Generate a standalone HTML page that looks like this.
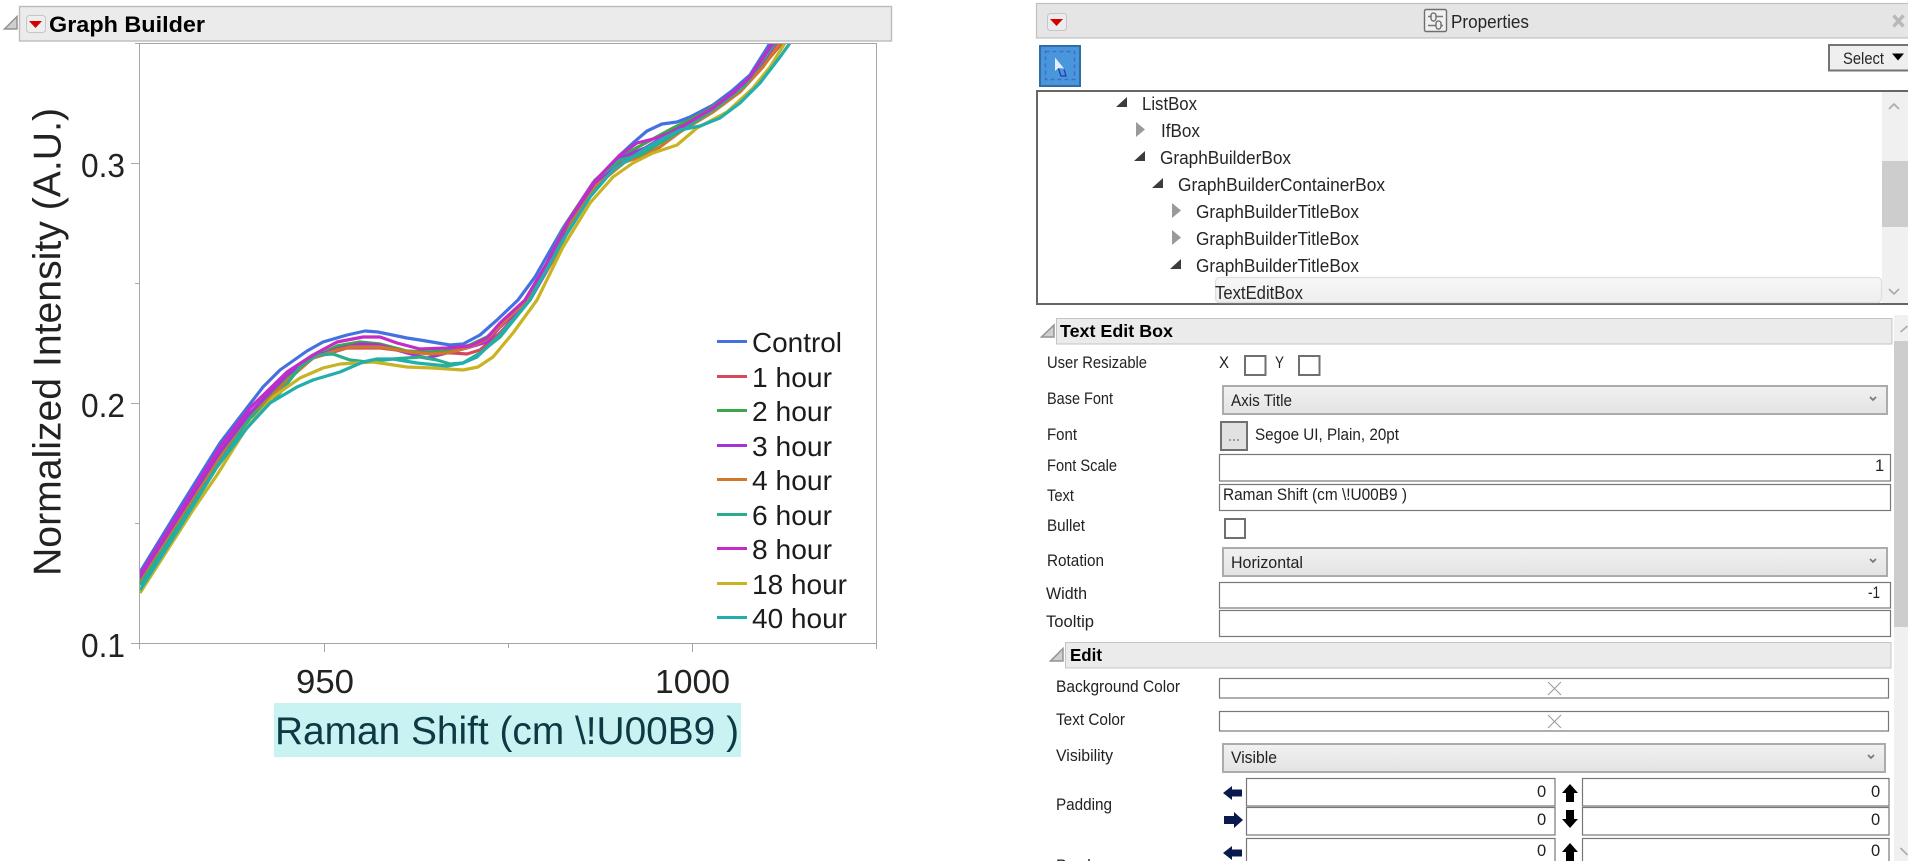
<!DOCTYPE html>
<html lang="en">
<head>
<meta charset="utf-8">
<title>Graph Builder</title>
<style>
html,body{margin:0;padding:0;background:#fff;width:1908px;height:862px;overflow:hidden}
svg{display:block;position:absolute;left:0;top:0}
text{font-family:"Liberation Sans",sans-serif;fill:#151515}
.l{font-size:16.5px;fill:#222}
.t{font-size:18px;fill:#262626}
.b{font-weight:bold}
.n{font-size:33px;fill:#222}
.g{font-size:27.5px;fill:#1c1c1c}
.box{fill:#fff;stroke:#777;stroke-width:1.2}
.chk{fill:#fff;stroke:#707070;stroke-width:2}
.dd{fill:url(#dd);stroke:#ababab;stroke-width:2}
.hd{fill:#ebebeb;stroke:#c4c4c4;stroke-width:1}
.c{fill:none;stroke-width:3.2;stroke-linejoin:round;stroke-linecap:butt}
.ax{stroke:#a6a6a6;stroke-width:1;fill:none}
.tri{fill:#cfcfcf;stroke:#939393;stroke-width:1.5}
</style>
</head>
<body>
<svg width="1908" height="862" viewBox="0 0 1908 862" xmlns="http://www.w3.org/2000/svg">
<defs>
<linearGradient id="dd" x1="0" y1="0" x2="0" y2="1"><stop offset="0" stop-color="#f1f1f1"/><stop offset="1" stop-color="#e3e3e3"/></linearGradient>
<linearGradient id="sel" x1="0" y1="0" x2="0" y2="1"><stop offset="0" stop-color="#f7f7f7"/><stop offset="1" stop-color="#eeeeee"/></linearGradient>
<clipPath id="plot"><rect x="140" y="44" width="736" height="599"/></clipPath>
<clipPath id="pg"><rect x="0" y="0" width="1908" height="861"/></clipPath>
</defs>

<!-- Graph Builder header -->
<rect x="19.5" y="6.5" width="872" height="34.5" fill="#ebebeb" stroke="#bcbcbc" stroke-width="1.4"/>
<path class="tri" d="M4.5 29 L17 29 L17 16.5 Z"/>
<rect x="26.5" y="15.5" width="19" height="17" rx="3" fill="#eeeeee" stroke="#c6c6c6"/>
<path d="M29 21 L42 21 L35.5 28 Z" fill="#d40000"/>
<text x="49" y="32" font-size="22" class="b" style="fill:#000" textLength="156" lengthAdjust="spacingAndGlyphs">Graph Builder</text>

<!-- Plot -->
<path class="ax" d="M135 43.5H876.5V649M139.5 43.5V649M131 643.5H876.5M131 163.5H139.5M135 283.5H139.5M131 403.5H139.5M135 523.5H139.5M324.5 643.5V652M508.5 643.5V648M692.5 643.5V652"/>

<text class="n" x="81" y="177" textLength="44" lengthAdjust="spacingAndGlyphs">0.3</text>
<text class="n" x="81" y="417" textLength="44" lengthAdjust="spacingAndGlyphs">0.2</text>
<text class="n" x="81" y="657" textLength="44" lengthAdjust="spacingAndGlyphs">0.1</text>
<text class="n" x="296" y="693" textLength="58" lengthAdjust="spacingAndGlyphs">950</text>
<text class="n" x="655" y="693" textLength="75" lengthAdjust="spacingAndGlyphs">1000</text>

<text transform="translate(60.5,576) rotate(-90)" font-size="39" style="fill:#222" textLength="468" lengthAdjust="spacingAndGlyphs">Normalized Intensity (A.U.)</text>

<rect x="274" y="703" width="467" height="54" fill="#c9f2f2"/>
<text x="275" y="744" font-size="39" style="fill:#0c3a44" textLength="464" lengthAdjust="spacingAndGlyphs">Raman Shift (cm \!U00B9 )</text>

<!-- Curves -->
<g clip-path="url(#plot)">
<polyline class="c" stroke="#4372e0" points="140,572 180,507 220,443 263,387 280,370 307,351 323,342 347,335 365,331 378,332 407,338 420,340 450,345 463,344 480,335 497,320 518,300 535,277 563,228 593,183 620,155 633,143 647,131 662,124 677,122 690,117 713,105 733,90 750,75 767,48 770,43"/>
<polyline class="c" stroke="#d44a5a" points="140,581 220,453 250,414 287,376 313,358 337,351 347,348 380,348 413,352 453,353 467,354 480,350 500,333 530,300 552,262 572,222 597,183 622,160 650,147 680,128 710,112 738,92 758,72 782,43"/>
<polyline class="c" stroke="#3aa84a" points="140,582 220,455 250,415 290,375 313,358 337,346 360,342 380,344 407,351 427,352 447,351 470,345 487,337 500,325 528,300 550,260 570,222 595,182 620,157 640,146 673,128 705,112 735,92 755,72 778,43"/>
<polyline class="c" stroke="#a534d8" points="140,578 220,452 250,413 287,375 310,358 337,349 360,344 380,345 407,353 427,358 447,353 467,348 487,342 500,327 530,300 550,265 570,225 595,185 620,158 645,148 675,130 700,118 730,95 750,78 777,43"/>
<polyline class="c" stroke="#d0782a" points="140,583 220,458 250,418 290,378 313,358 337,350 350,347 380,347 410,352 430,354 447,353 470,347 487,339 500,326 527,300 555,258 572,222 597,185 625,162 637,158 660,147 680,132 713,112 740,92 763,67 780,43"/>
<polyline class="c" stroke="#2aad8c" points="140,585 220,462 250,418 280,393 300,367 317,355 333,354 350,360 367,362 393,359 420,357 437,360 450,364 463,363 480,353 500,337 530,300 565,225 595,180 620,160 640,155 660,143 690,125 720,105 745,85 775,43"/>
<polyline class="c" stroke="#c42cc8" points="140,575 220,447 250,408 287,372 313,355 337,342 363,337 380,337 397,343 420,349 447,348 470,346 487,338 500,323 525,300 547,263 567,223 593,183 620,155 637,143 653,139 673,132 693,120 713,108 733,93 750,77 773,43"/>
<polyline class="c" stroke="#c8b422" points="140,593 193,510 217,475 247,427 273,397 300,378 323,368 340,364 373,362 407,367 433,368 463,370 478,367 493,357 513,333 537,300 563,247 590,203 613,177 633,163 653,153 677,145 697,128 727,112 753,88 770,67 785,43"/>
<polyline class="c" stroke="#22aeac" points="140,590 180,527 217,467 247,428 270,403 297,387 313,380 340,372 363,362 377,359 393,359 417,363 447,366 463,363 477,357 500,335 530,300 563,240 590,197 613,170 640,152 660,140 680,130 700,126 720,118 740,103 760,83 780,57 790,43"/>
</g>

<!-- Legend -->
<g stroke-width="3">
<line x1="717" x2="747" y1="341.5" y2="341.5" stroke="#4372e0"/>
<line x1="717" x2="747" y1="376.5" y2="376.5" stroke="#d44a5a"/>
<line x1="717" x2="747" y1="410.5" y2="410.5" stroke="#3aa84a"/>
<line x1="717" x2="747" y1="445.5" y2="445.5" stroke="#a534d8"/>
<line x1="717" x2="747" y1="479.5" y2="479.5" stroke="#d0782a"/>
<line x1="717" x2="747" y1="514.5" y2="514.5" stroke="#2aad8c"/>
<line x1="717" x2="747" y1="548.5" y2="548.5" stroke="#c42cc8"/>
<line x1="717" x2="747" y1="583.5" y2="583.5" stroke="#c8b422"/>
<line x1="717" x2="747" y1="617.5" y2="617.5" stroke="#22aeac"/>
</g>
<text class="g" x="752" y="352" textLength="90" lengthAdjust="spacingAndGlyphs">Control</text>
<text class="g" x="752" y="387" textLength="80" lengthAdjust="spacingAndGlyphs">1 hour</text>
<text class="g" x="752" y="421" textLength="80" lengthAdjust="spacingAndGlyphs">2 hour</text>
<text class="g" x="752" y="456" textLength="80" lengthAdjust="spacingAndGlyphs">3 hour</text>
<text class="g" x="752" y="490" textLength="80" lengthAdjust="spacingAndGlyphs">4 hour</text>
<text class="g" x="752" y="525" textLength="80" lengthAdjust="spacingAndGlyphs">6 hour</text>
<text class="g" x="752" y="559" textLength="80" lengthAdjust="spacingAndGlyphs">8 hour</text>
<text class="g" x="752" y="594" textLength="95" lengthAdjust="spacingAndGlyphs">18 hour</text>
<text class="g" x="752" y="628" textLength="95" lengthAdjust="spacingAndGlyphs">40 hour</text>

<!-- Properties header -->
<rect x="1036.5" y="3.5" width="873" height="34.5" fill="#e5e5e5" stroke="#c0c0c0" stroke-width="1.2"/>
<rect x="1047.5" y="13.5" width="19" height="17" rx="3" fill="#ececec" stroke="#c6c6c6"/>
<path d="M1050 19 L1063 19 L1056.5 26 Z" fill="#d40000"/>
<rect x="1424.5" y="9.5" width="22" height="22" rx="1.5" fill="#f1f1f1" stroke="#6f6f6f" stroke-width="1.4"/>
<path d="M1428 16.5H1443M1428 25.5H1443" stroke="#777" stroke-width="1.4" fill="none"/>
<rect x="1431" y="13" width="5" height="8" rx="2.5" fill="#eee" stroke="#666" stroke-width="1.3"/>
<rect x="1436" y="21" width="5" height="8" rx="2.5" fill="#eee" stroke="#666" stroke-width="1.3"/>
<text class="t" x="1451" y="28" textLength="78" lengthAdjust="spacingAndGlyphs">Properties</text>
<path d="M1893.5 15.5L1903.5 26.5M1903.5 15.5L1893.5 26.5" stroke="#b8b8b8" stroke-width="3.4" fill="none"/>

<!-- Arrow tool button -->
<rect x="1040" y="46" width="40" height="40" fill="#4a96dc" stroke="#2f6ea5" stroke-width="2"/>
<rect x="1045.5" y="51.5" width="29" height="28" fill="none" stroke="#3f6cc4" stroke-width="1.4" stroke-dasharray="4 3"/>
<path d="M1055 57.5 L1055 71 L1058.5 68 L1064 68.5 Z" fill="#e4edfa"/>
<path d="M1058.5 68.5 L1061 76 H1066 L1064 69.5" fill="none" stroke="#1f3fb0" stroke-width="1.3"/>

<!-- Select button -->
<rect x="1829" y="45" width="82" height="25.5" fill="#efefef" stroke="#747474" stroke-width="2"/>
<text class="t" x="1843" y="64" textLength="41" lengthAdjust="spacingAndGlyphs" style="font-size:17px">Select</text>
<path d="M1892 53.5 H1904 L1898 60.5 Z" fill="#000"/>

<!-- Tree box -->
<rect x="1037" y="91" width="873" height="213" fill="#fff" stroke="#666" stroke-width="2"/>
<rect x="1882" y="92" width="26" height="211" fill="#f0f0f0"/>
<rect x="1882" y="161" width="26" height="66" fill="#cdcdcd"/>
<path d="M1889 109L1894 104L1899 109" fill="none" stroke="#aaa" stroke-width="1.6"/>
<path d="M1889 289L1894 294L1899 289" fill="none" stroke="#aaa" stroke-width="1.6"/>
<rect x="1215.5" y="277.5" width="666" height="25" rx="4" fill="url(#sel)" stroke="#dedede" stroke-width="1.2"/>

<g fill="#3c3c3c">
<path d="M1116 107H1127V97Z"/><path d="M1134 161H1145V151Z"/><path d="M1152 188H1163V178Z"/><path d="M1170 269H1181V259Z"/>
</g>
<g fill="#9a9a9a">
<path d="M1136 122V137L1145 129.5Z"/><path d="M1172 203V218L1181 210.5Z"/><path d="M1172 230V245L1181 237.5Z"/>
</g>
<text class="t" x="1142" y="110" textLength="55" lengthAdjust="spacingAndGlyphs">ListBox</text>
<text class="t" x="1161" y="137" textLength="39" lengthAdjust="spacingAndGlyphs">IfBox</text>
<text class="t" x="1160" y="164" textLength="131" lengthAdjust="spacingAndGlyphs">GraphBuilderBox</text>
<text class="t" x="1178" y="191" textLength="207" lengthAdjust="spacingAndGlyphs">GraphBuilderContainerBox</text>
<text class="t" x="1196" y="218" textLength="163" lengthAdjust="spacingAndGlyphs">GraphBuilderTitleBox</text>
<text class="t" x="1196" y="245" textLength="163" lengthAdjust="spacingAndGlyphs">GraphBuilderTitleBox</text>
<text class="t" x="1196" y="272" textLength="163" lengthAdjust="spacingAndGlyphs">GraphBuilderTitleBox</text>
<text class="t" x="1215" y="299" textLength="88" lengthAdjust="spacingAndGlyphs">TextEditBox</text>

<!-- Right scrollbar -->
<rect x="1894" y="315" width="14" height="546" fill="#f0f0f0"/>
<rect x="1894" y="341" width="14" height="286" fill="#cdcdcd"/>
<path d="M1900.5 332L1907.5 326" fill="none" stroke="#aaa" stroke-width="1.6"/>
<path d="M1900.5 848L1907.5 855" fill="none" stroke="#aaa" stroke-width="1.6"/>

<!-- Text Edit Box section -->
<rect x="1056.5" y="318.5" width="835.5" height="25.5" class="hd"/>
<path class="tri" d="M1041.5 337 L1054 337 L1054 325 Z"/>
<text x="1060" y="337" font-size="17.5" class="b" style="fill:#000" textLength="113" lengthAdjust="spacingAndGlyphs">Text Edit Box</text>

<text class="l" x="1047" y="368" textLength="100" lengthAdjust="spacingAndGlyphs">User Resizable</text>
<text class="l" x="1219" y="368" textLength="10" lengthAdjust="spacingAndGlyphs">X</text>
<rect class="chk" x="1245" y="356" width="20.5" height="19"/>
<text class="l" x="1275" y="368" textLength="9" lengthAdjust="spacingAndGlyphs">Y</text>
<rect class="chk" x="1299" y="356" width="20.5" height="19"/>

<text class="l" x="1047" y="404" textLength="66" lengthAdjust="spacingAndGlyphs">Base Font</text>
<rect class="dd" x="1223" y="386" width="664" height="28"/>
<text class="l" x="1231" y="406" textLength="61" lengthAdjust="spacingAndGlyphs">Axis Title</text>
<path d="M1870 397L1873 400L1876 397" fill="none" stroke="#777" stroke-width="1.7"/>

<text class="l" x="1047" y="440" textLength="30" lengthAdjust="spacingAndGlyphs">Font</text>
<rect x="1221" y="422" width="26" height="28" fill="#e1e1e1" stroke="#707070" stroke-width="2"/>
<path d="M1229 440h2M1233 440h2M1237 440h2" stroke="#888" stroke-width="1.5" fill="none"/>
<text class="l" x="1255" y="440" textLength="144" lengthAdjust="spacingAndGlyphs">Segoe UI, Plain, 20pt</text>

<text class="l" x="1047" y="471" textLength="70" lengthAdjust="spacingAndGlyphs">Font Scale</text>
<rect class="box" x="1219.5" y="454.5" width="671" height="26.5"/>
<text class="l" x="1875" y="471">1</text>

<text class="l" x="1047" y="501" textLength="27" lengthAdjust="spacingAndGlyphs">Text</text>
<rect class="box" x="1219.5" y="484.5" width="671" height="26"/>
<text class="l" x="1223" y="500" textLength="184" lengthAdjust="spacingAndGlyphs">Raman Shift (cm \!U00B9 )</text>

<text class="l" x="1047" y="531" textLength="38" lengthAdjust="spacingAndGlyphs">Bullet</text>
<rect class="chk" x="1225" y="519" width="20" height="19"/>

<text class="l" x="1047" y="566" textLength="57" lengthAdjust="spacingAndGlyphs">Rotation</text>
<rect class="dd" x="1223" y="548" width="664" height="28"/>
<text class="l" x="1231" y="568" textLength="72" lengthAdjust="spacingAndGlyphs">Horizontal</text>
<path d="M1870 559L1873 562L1876 559" fill="none" stroke="#777" stroke-width="1.7"/>

<text class="l" x="1046" y="599" textLength="41" lengthAdjust="spacingAndGlyphs">Width</text>
<rect class="box" x="1219.5" y="582.5" width="671" height="25.5"/>
<text class="l" x="1868" y="598" textLength="12" lengthAdjust="spacingAndGlyphs">-1</text>

<text class="l" x="1046" y="627" textLength="48" lengthAdjust="spacingAndGlyphs">Tooltip</text>
<rect class="box" x="1219.5" y="610.5" width="671" height="26"/>

<!-- Edit section -->
<rect x="1065.5" y="642.5" width="825.5" height="25.5" class="hd"/>
<path class="tri" d="M1050.5 661 L1063 661 L1063 648.5 Z"/>
<text x="1070" y="661" font-size="17.5" class="b" style="fill:#000" textLength="32" lengthAdjust="spacingAndGlyphs">Edit</text>

<text class="l" x="1056" y="692" textLength="124" lengthAdjust="spacingAndGlyphs">Background Color</text>
<rect class="box" x="1219.5" y="678.5" width="669" height="19.5"/>
<path d="M1548 682L1561 695M1561 682L1548 695" stroke="#999" stroke-width="1" fill="none"/>

<text class="l" x="1056" y="725" textLength="69" lengthAdjust="spacingAndGlyphs">Text Color</text>
<rect class="box" x="1219.5" y="711.5" width="669" height="19.5"/>
<path d="M1548 715L1561 728M1561 715L1548 728" stroke="#999" stroke-width="1" fill="none"/>

<text class="l" x="1056" y="761" textLength="57" lengthAdjust="spacingAndGlyphs">Visibility</text>
<rect class="dd" x="1223" y="744" width="662" height="28"/>
<text class="l" x="1231" y="763" textLength="46" lengthAdjust="spacingAndGlyphs">Visible</text>
<path d="M1868 755L1871 758L1874 755" fill="none" stroke="#777" stroke-width="1.7"/>

<text class="l" x="1056" y="810" textLength="56" lengthAdjust="spacingAndGlyphs">Padding</text>

<g clip-path="url(#pg)">
<text class="l" x="1056" y="871">Border</text>

<rect class="box" x="1246.5" y="778.5" width="308.5" height="27.5"/>
<rect class="box" x="1582.5" y="778.5" width="306.5" height="27.5"/>
<rect class="box" x="1246.5" y="807.5" width="308.5" height="27.5"/>
<rect class="box" x="1582.5" y="807.5" width="306.5" height="27.5"/>
<rect class="box" x="1246.5" y="838.5" width="308.5" height="40"/>
<rect class="box" x="1582.5" y="838.5" width="306.5" height="40"/>

<text class="l" x="1537" y="797">0</text>
<text class="l" x="1871" y="797">0</text>
<text class="l" x="1537" y="825">0</text>
<text class="l" x="1871" y="825">0</text>
<text class="l" x="1537" y="856">0</text>
<text class="l" x="1871" y="856">0</text>

<g fill="#0a1a4d">
<path d="M1223 793L1232 786V789.5H1242V796.5H1232V800Z"/>
<path d="M1243 820L1234 812V816H1224V824H1234V828Z"/>
<path d="M1223 853L1232 846V849.5H1242V856.5H1232V860Z"/>
</g>
<g fill="#000">
<path d="M1570 784L1578 793H1574V802H1566V793H1562Z"/>
<path d="M1570 828L1578 819H1574V810H1566V819H1562Z"/>
<path d="M1570 843L1578 852H1574V861H1566V852H1562Z"/>
</g>
</g>
</svg>
</body>
</html>
